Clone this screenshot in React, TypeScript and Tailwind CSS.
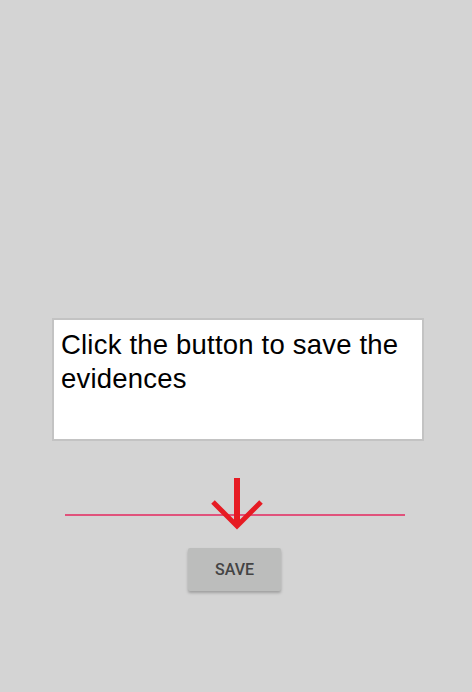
export default function App() {
  return (
    <div className="w-[472px] min-h-[692px] bg-[#d4d4d4] flex flex-col">
      {/* Message box */}
      <div className="mt-[318px] ml-[52px] w-[372px] h-[123px] border-2 border-[#c3c3c3] bg-white pl-[7px] pt-[8px]">
        <p className="font-['Liberation_Sans',Arial,sans-serif] text-[27.5px] leading-[34px] tracking-[0.2px] text-black">
          Click the button to save the evidences
        </p>
      </div>

      {/* Divider with arrow */}
      <div className="relative mt-[37px] ml-[65px] w-[340px] h-[50px]">
        <div className="mt-[36px] h-[2px] bg-[#e0527b]" />
        <svg
          className="absolute left-[145px] top-0"
          width="54"
          height="52"
          viewBox="0 0 54 52"
          fill="none"
        >
          <line x1="27" y1="0" x2="27" y2="47" stroke="#e61b23" strokeWidth="6" />
          <polyline points="3,24 27,48 51,24" stroke="#e61b23" strokeWidth="5" />
        </svg>
      </div>

      {/* Save button */}
      <button className="mt-[20px] ml-[188px] w-[93px] h-[43px] bg-[#bcbdbc] rounded-[2px] shadow-[0_2px_3px_rgba(0,0,0,0.25)] font-['Roboto',sans-serif] font-medium text-[16px] text-[#444]">
        SAVE
      </button>
    </div>
  );
}
